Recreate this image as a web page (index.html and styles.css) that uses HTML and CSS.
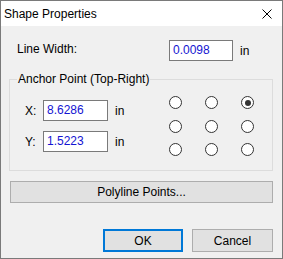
FILE: index.html
```html
<!DOCTYPE html>
<html lang="en">
<head>
  <meta charset="UTF-8">
  <title>Shape Properties</title>
  <link rel="stylesheet" href="styles.css">
</head>
<body>
  <!-- Dialog window -->
  <div class="dialog">
    <div class="title-bar">
      <span class="title">Shape Properties</span>
      <svg class="close-icon" width="10" height="10" viewBox="0 0 10 10">
        <path d="M0.5 0.5 L9.5 9.5 M9.5 0.5 L0.5 9.5" stroke="#000" stroke-width="1" fill="none"/>
      </svg>
    </div>

    <div class="content">
      <!-- Line width row -->
      <div class="line-row">
        <span class="line-label">Line Width:</span>
        <div class="textbox wide">0.0098</div>
        <span class="unit">in</span>
      </div>

      <!-- Anchor group -->
      <fieldset class="anchor-group">
        <legend>Anchor Point (Top-Right)</legend>
        <div class="anchor-body">
          <div class="coords">
            <div class="coord-row">
              <span class="coord-label">X:</span>
              <div class="textbox">8.6286</div>
              <span class="unit">in</span>
            </div>
            <div class="coord-row">
              <span class="coord-label">Y:</span>
              <div class="textbox">1.5223</div>
              <span class="unit">in</span>
            </div>
          </div>
          <div class="radio-grid">
            <span class="radio"></span>
            <span class="radio"></span>
            <span class="radio checked"></span>
            <span class="radio"></span>
            <span class="radio"></span>
            <span class="radio"></span>
            <span class="radio"></span>
            <span class="radio"></span>
            <span class="radio"></span>
          </div>
        </div>
      </fieldset>

      <div class="btn polyline">Polyline Points...</div>

      <div class="actions">
        <div class="btn ok">OK</div>
        <div class="btn">Cancel</div>
      </div>
    </div>
  </div>
</body>
</html>
```

FILE: styles.css
```css
/* Reset and base font */
body {
  margin: 0;
  padding: 0;
  background: #f0f0f0;
  font-family: "Liberation Sans", Arial, sans-serif;
  font-size: 12px;
  color: #000;
}

/* Window frame */
.dialog {
  width: 283px;
  height: 259px;
  box-sizing: border-box;
  border: 1px solid #7a7a7a;
  background: #f0f0f0;
  display: flex;
  flex-direction: column;
}

/* Title bar */
.title-bar {
  height: 25px;
  background: #fff;
  display: flex;
  align-items: center;
  justify-content: space-between;
  padding: 0 10px 0 3px;
  flex-shrink: 0;
}
.title {
  font-size: 12px;
  padding-top: 1px;
}
.close-icon {
  display: block;
  margin-top: 1px;
}

/* Dialog body */
.content {
  padding: 14px 9px 0 8px;
  display: flex;
  flex-direction: column;
}

.line-row {
  display: flex;
  align-items: center;
  height: 21px;
}
.line-label {
  width: 152px;
  padding-left: 8px;
  padding-bottom: 4px;
}

/* Edit boxes */
.textbox {
  box-sizing: border-box;
  width: 65px;
  height: 21px;
  border: 1px solid #7a7a7a;
  background: #fff;
  color: #1414d2;
  padding: 0 0 0 3px;
  line-height: 19px;
}
.textbox.wide {
  width: 64px;
}
.unit {
  margin-left: 7px;
}

/* Group box */
.anchor-group {
  margin: 10px 0 0 0;
  padding: 0;
  border: 1px solid #dcdcdc;
  min-width: 0;
}
.anchor-group legend {
  margin-left: 7px;
  padding: 0 1px;
  line-height: 16px;
}
.anchor-body {
  display: flex;
  align-items: flex-start;
  justify-content: space-between;
  padding: 9px 18px 14px 15px;
}
.coords {
  display: flex;
  flex-direction: column;
  gap: 10px;
  margin-top: 4px;
}
.coord-row {
  display: flex;
  align-items: center;
  height: 21px;
}
.coord-label {
  width: 18px;
}

/* Radio button grid */
.radio-grid {
  display: grid;
  grid-template-columns: repeat(3, 13px);
  column-gap: 23px;
  row-gap: 10.5px;
}
.radio {
  box-sizing: border-box;
  width: 13px;
  height: 13px;
  border: 1px solid #333;
  border-radius: 50%;
  background: #fff;
  position: relative;
}
.radio.checked::after {
  content: "";
  position: absolute;
  left: 2.5px;
  top: 2.5px;
  width: 6px;
  height: 6px;
  border-radius: 50%;
  background: #333;
}

/* Push buttons */
.btn {
  box-sizing: border-box;
  height: 23px;
  border: 1px solid #adadad;
  background: #e1e1e1;
  display: flex;
  align-items: center;
  justify-content: center;
}
.polyline {
  margin: 10px 0 0 1px;
  height: 22px;
}
.actions {
  display: flex;
  justify-content: flex-end;
  gap: 9px;
  margin-top: 26px;
}
.actions .btn {
  width: 81px;
}
.actions .btn.ok {
  width: 80px;
  border: 2px solid #0078d7;
}
```
